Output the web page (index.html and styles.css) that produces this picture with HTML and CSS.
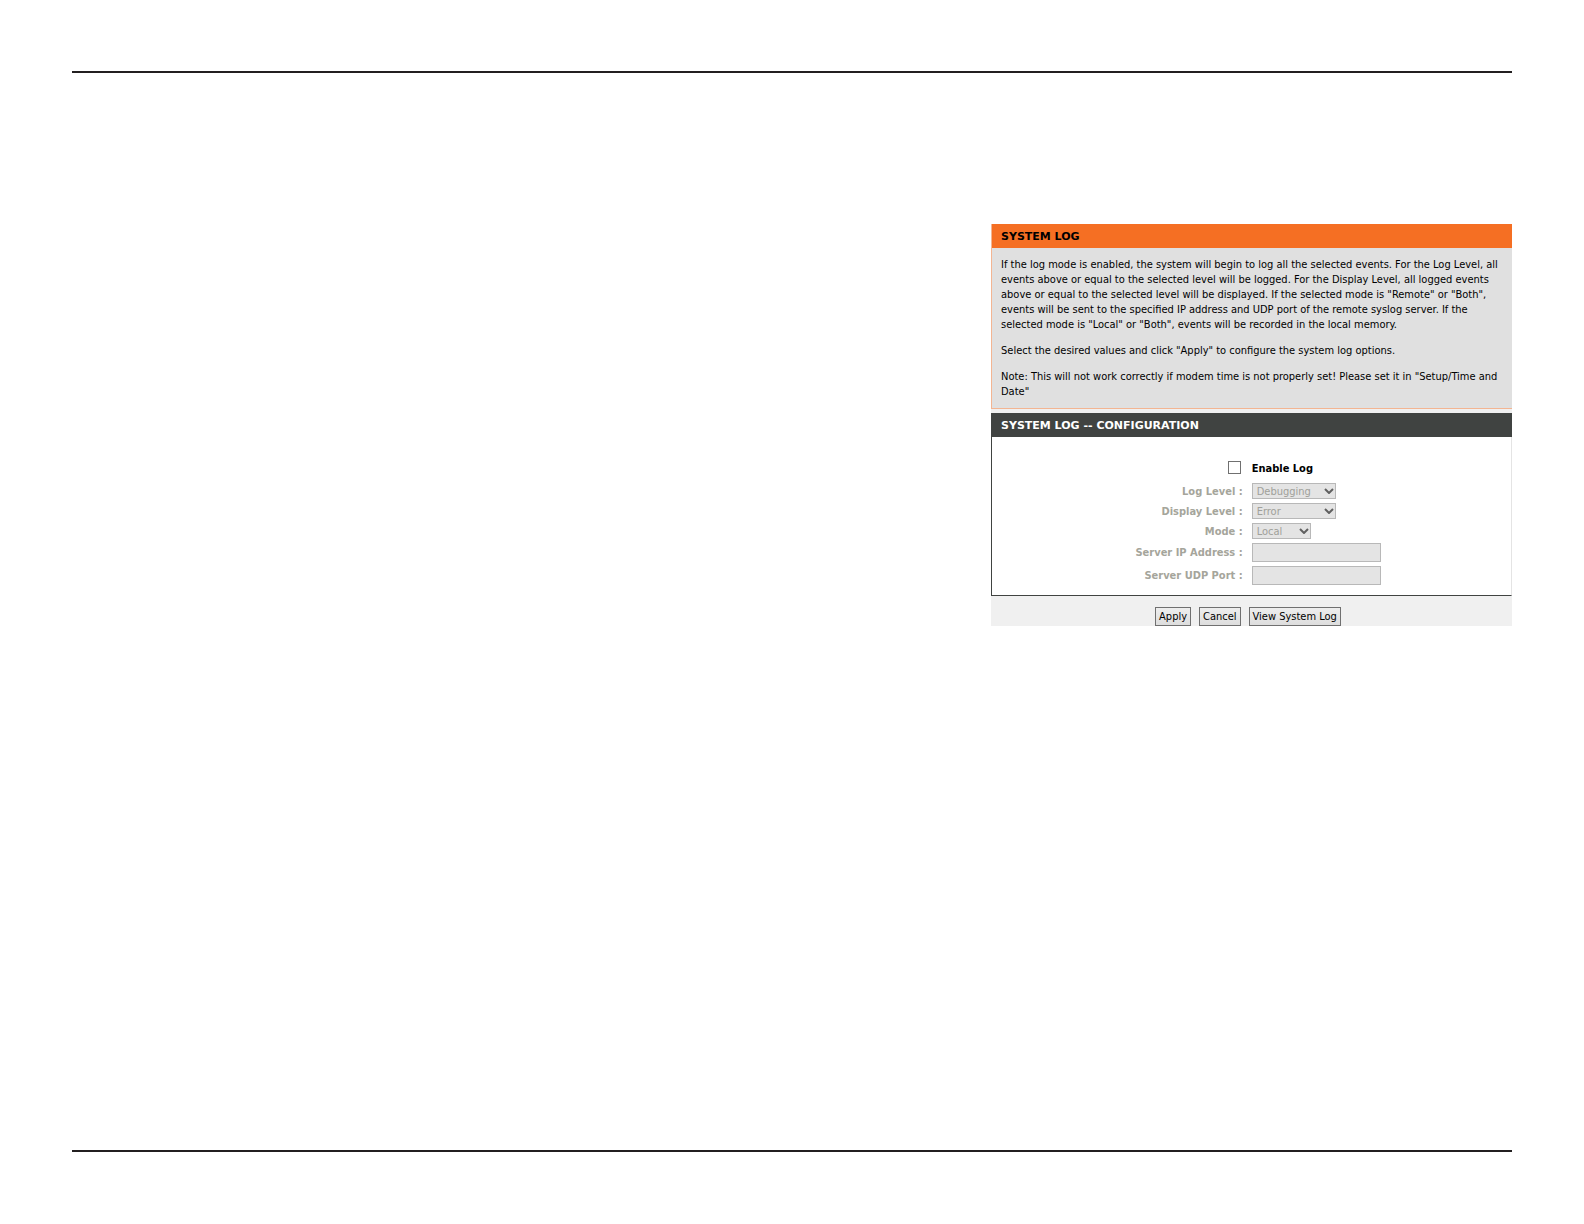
FILE: index.html
```html
<!DOCTYPE html>
<html lang="en">
<head>
    <meta charset="UTF-8">
    <meta name="viewport" content="width=device-width, initial-scale=1.0">
    <title>System Log</title>
    <link rel="stylesheet" href="styles.css">
</head>
<body>
    <main class="page">
        <div class="panel">
            <!-- Description -->
            <section class="intro">
                <h1 class="intro-title">SYSTEM LOG</h1>
                <div class="intro-body">
                    <p>If the log mode is enabled, the system will begin to log all the selected events. For the Log Level, all events above or equal to the selected level will be logged. For the Display Level, all logged events above or equal to the selected level will be displayed. If the selected mode is "Remote" or "Both", events will be sent to the specified IP address and UDP port of the remote syslog server. If the selected mode is "Local" or "Both", events will be recorded in the local memory.</p>
                    <p>Select the desired values and click "Apply" to configure the system log options.</p>
                    <p>Note: This will not work correctly if modem time is not properly set! Please set it in "Setup/Time and Date"</p>
                </div>
            </section>

            <!-- Configuration form -->
            <form class="config">
                <h2 class="config-title">SYSTEM LOG -- CONFIGURATION</h2>
                <div class="config-body">
                    <input type="checkbox" id="enableLog" class="check">
                    <label for="enableLog" class="check-label">Enable Log</label>

                    <label for="logLevel" class="label">Log Level :</label>
                    <span class="select-wrap">
                        <select id="logLevel" class="select" disabled>
                            <option>Debugging</option>
                        </select>
                        <svg class="arrow" viewBox="0 0 10 6"><path d="M1 1l4 4 4-4"/></svg>
                    </span>

                    <label for="displayLevel" class="label">Display Level :</label>
                    <span class="select-wrap">
                        <select id="displayLevel" class="select" disabled>
                            <option>Error</option>
                        </select>
                        <svg class="arrow" viewBox="0 0 10 6"><path d="M1 1l4 4 4-4"/></svg>
                    </span>

                    <label for="mode" class="label">Mode :</label>
                    <span class="select-wrap">
                        <select id="mode" class="select select-short" disabled>
                            <option>Local</option>
                        </select>
                        <svg class="arrow" viewBox="0 0 10 6"><path d="M1 1l4 4 4-4"/></svg>
                    </span>

                    <label for="serverIp" class="label">Server IP Address :</label>
                    <input type="text" id="serverIp" class="text" disabled>

                    <label for="serverPort" class="label">Server UDP Port :</label>
                    <input type="text" id="serverPort" class="text" disabled>
                </div>
                <div class="buttons">
                    <button type="button">Apply</button>
                    <button type="button">Cancel</button>
                    <button type="button">View System Log</button>
                </div>
            </form>
        </div>
    </main>
</body>
</html>
```
FILE: styles.css
```css
* {
    box-sizing: border-box;
}
body {
    margin: 0;
    padding: 71px 72px 72px;
    min-height: 100vh;
    display: flex;
    background-color: #fff;
    color: #000;
    font-family: "DejaVu Sans Condensed", "DejaVu Sans", sans-serif;
    font-size: 11px;
    line-height: 15px;
}
.page {
    flex: 1;
    display: flex;
    justify-content: flex-end;
    align-items: flex-start;
    padding-top: 151px;
    border-top: 2px solid #231f20;
    border-bottom: 2px solid #231f20;
}
.panel {
    width: 36%;
    min-width: 521px;
    background-color: #f0f0f0;
}
.intro-title, .config-title {
    margin: 0;
    padding: 2px 10px 0;
    font-family: "DejaVu Sans", sans-serif;
    font-size: 11px;
    font-weight: bold;
    line-height: 22px;
}
.intro {
    margin-bottom: 4px;
    border: 1px solid #f3b592;
    border-top: none;
    border-right: none;
    background-color: #e0e0e0;
}
.intro-title {
    padding-left: 9px;
    background-color: #f56f23;
}
.intro-body {
    padding: 9px;
}
.intro-body p {
    margin: 0 0 11px;
}
.intro-body p:last-child {
    margin-bottom: 0;
}
.config-title {
    background-color: #404341;
    color: #fff;
}
.config-body {
    display: grid;
    grid-template-columns: 48% 1fr;
    column-gap: 9px;
    row-gap: 4px;
    align-items: center;
    padding: 22px 0 10px 3px;
    border: 1px solid #404341;
    border-top: none;
    border-right-color: #e4e4e4;
    background-color: #fff;
}
.label, .check-label {
    font-weight: bold;
}
.label {
    text-align: right;
    color: #a5a59b;
}
.check-label {
    line-height: 20px;
}
.check {
    appearance: none;
    justify-self: end;
    width: 13px;
    height: 13px;
    margin: 0 2px 4px 0;
    border: 1px solid #707070;
    background-color: #fff;
}
.check:checked {
    background-color: #404341;
}
.select-wrap {
    position: relative;
    display: flex;
    justify-self: start;
}
.select, .text {
    margin: 0;
    border: 1px solid #b8b8b8;
    border-radius: 0;
    background-color: #e4e4e4;
    color: #a0a09a;
    font-family: inherit;
    font-size: 11px;
    opacity: 1;
}
.select {
    appearance: none;
    width: 84px;
    height: 16px;
    padding: 1px 4px 0;
    line-height: 13px;
}
.select-short {
    width: 59px;
}
.arrow {
    position: absolute;
    top: 5px;
    right: 2px;
    width: 10px;
    height: 6px;
    fill: none;
    stroke: #606060;
    stroke-width: 2;
    pointer-events: none;
}
.text {
    width: 129px;
    height: 19px;
    padding: 0 4px;
}
.buttons {
    display: flex;
    justify-content: center;
    gap: 8px;
    padding-top: 11px;
    padding-right: 7px;
}
button {
    height: 19px;
    padding: 0 3px;
    border: 1px solid #707070;
    border-radius: 0;
    background: linear-gradient(#eee, #ddd);
    color: #000;
    font-family: inherit;
    font-size: 11px;
    line-height: 17px;
}
```
